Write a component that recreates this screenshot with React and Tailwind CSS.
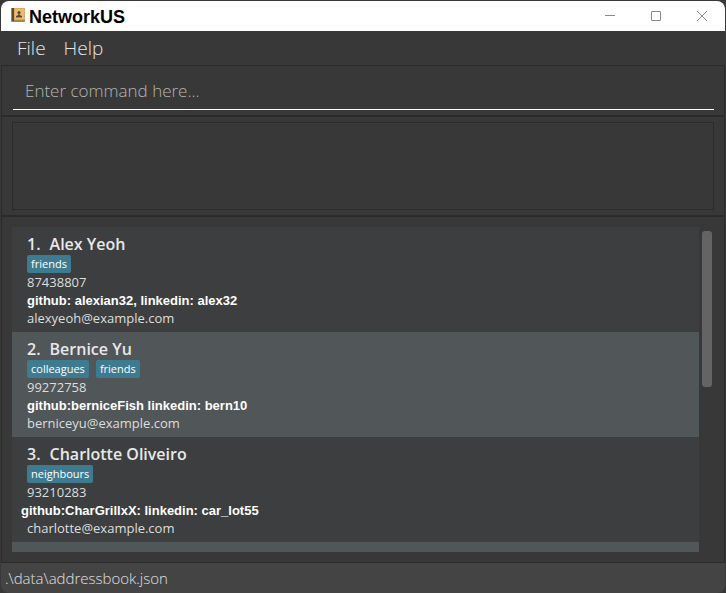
const people = [
  {
    name: "Alex Yeoh",
    tags: ["friends"],
    phone: "87438807",
    social: "github: alexian32, linkedin: alex32",
    email: "alexyeoh@example.com",
  },
  {
    name: "Bernice Yu",
    tags: ["colleagues", "friends"],
    phone: "99272758",
    social: "github:berniceFish linkedin: bern10",
    email: "berniceyu@example.com",
  },
  {
    name: "Charlotte Oliveiro",
    tags: ["neighbours"],
    phone: "93210283",
    social: "github:CharGrillxX: linkedin: car_lot55",
    email: "charlotte@example.com",
    wide: true,
  },
];

function BookIcon() {
  return (
    <svg width="16" height="16" viewBox="0 0 16 16" aria-hidden="true">
      <rect x="2" y="0" width="14" height="14" rx="1" fill="#b8803c" />
      <rect x="4" y="0" width="12" height="12" fill="#dcab5c" />
      <rect x="6" y="1" width="9" height="10" fill="#e6bd74" />
      <rect x="2" y="0" width="1" height="13" fill="#a08468" />
      <rect x="3" y="0" width="2" height="13" fill="#5e4636" />
      <circle cx="10" cy="4.500" r="1.600" fill="#5e4636" />
      <path d="M9.300 5.500h1.400v1.600l2.300.8v1.600H7V7.900l2.300-.8z" fill="#5e4636" />
    </svg>
  );
}

function TitleBar() {
  const control = "flex h-7 w-[46px] items-center justify-center";
  return (
    <header className="flex h-[30px] items-center rounded-t-lg bg-white pl-2">
      <BookIcon />
      <h1 className="ml-1 pt-0.5 font-['Liberation_Sans',Arial,sans-serif] text-[18px] leading-7 font-bold text-black">
        NetworkUS
      </h1>
      <div className="ml-auto flex">
        <button type="button" aria-label="Minimize" className={control}>
          <svg width="10" height="10" viewBox="0 0 10 10" stroke="#8a8a8a">
            <path d="M0 4.500h10" />
          </svg>
        </button>
        <button type="button" aria-label="Maximize" className={control}>
          <svg width="10" height="10" viewBox="0 0 10 10" fill="none" stroke="#8a8a8a">
            <rect x=".5" y=".5" width="9" height="9" rx=".5" />
          </svg>
        </button>
        <button type="button" aria-label="Close" className={control}>
          <svg width="10" height="10" viewBox="0 0 10 10" stroke="#8a8a8a">
            <path d="M0 0l10 10M10 0L0 10" />
          </svg>
        </button>
      </div>
    </header>
  );
}

function PersonRow({ person, index }) {
  return (
    <li className="h-[105px] shrink-0 pt-[7px] pl-[15px] odd:bg-[#3c3e3f] even:bg-[#515658]">
      <h2 className="flex gap-[9px] text-[16px] leading-[21px] font-semibold text-[#e8e8e8]">
        <span>{index}.</span>
        <span>{person.name}</span>
      </h2>
      <ul className="flex gap-[7px]">
        {person.tags.map((tag) => (
          <li key={tag} className="rounded-[2px] bg-[#3e7b91] px-1 text-[11px] leading-[18px] font-medium text-white">
            {tag}
          </li>
        ))}
      </ul>
      <p className="text-[13px] leading-[18px] text-[#dedede]">{person.phone}</p>
      <p
        className={`font-['Liberation_Sans',Arial,sans-serif] text-[13px] leading-[20px] font-bold text-white ${person.wide ? "-ml-[6px]" : ""}`}
      >
        {person.social}
      </p>
      <p className="text-[13px] leading-[14px] text-[#dedede]">{person.email}</p>
    </li>
  );
}

export default function App() {
  return (
    <div className="flex h-screen flex-col bg-[#383838] px-px pt-px font-['Open_Sans','Noto_Sans',sans-serif]">
      <TitleBar />
      <nav className="flex h-[35px] gap-[18px] border-b border-[#2b2b2b] px-4 text-[19px] font-light text-[#e4e4e4]">
        <button type="button">File</button>
        <button type="button">Help</button>
      </nav>
      <div className="flex min-h-0 flex-1 flex-col border-x border-[#2b2b2b]">
        <div className="h-[51px] border-b-2 border-[#2b2b2b] pt-[6px] pr-[10px] pl-[11px]">
          <input
            type="text"
            aria-label="Command"
            placeholder="Enter command here..."
            className="h-[38px] w-full border-b border-white bg-transparent px-3 text-[17px] font-light text-white outline-none placeholder:text-[#b4b4b4]"
          />
        </div>
        <div className="border-b-2 border-[#2b2b2b] px-[10px] py-[5px]">
          <output aria-label="Result" className="block h-[88px] border border-[#2b2b2b]" />
        </div>
        <main className="flex min-h-0 flex-1 gap-[3px] border-b border-[#2b2b2b] py-[10px] pr-3 pl-[10px]">
          <ol className="flex min-h-0 flex-1 flex-col overflow-hidden">
            {people.map((person, i) => (
              <PersonRow key={person.name} person={person} index={i + 1} />
            ))}
            <li aria-hidden="true" className="min-h-0 flex-1 bg-[#515658]" />
          </ol>
          <div className="mt-1 h-[156px] w-[10px] rounded-[3px] bg-[#646464]" />
        </main>
      </div>
      <footer className="h-[30px] rounded-b-lg bg-[#444444] px-1 text-[15px] leading-[30px] font-light text-[#e0e0e0]">
        .\data\addressbook.json
      </footer>
    </div>
  );
}
